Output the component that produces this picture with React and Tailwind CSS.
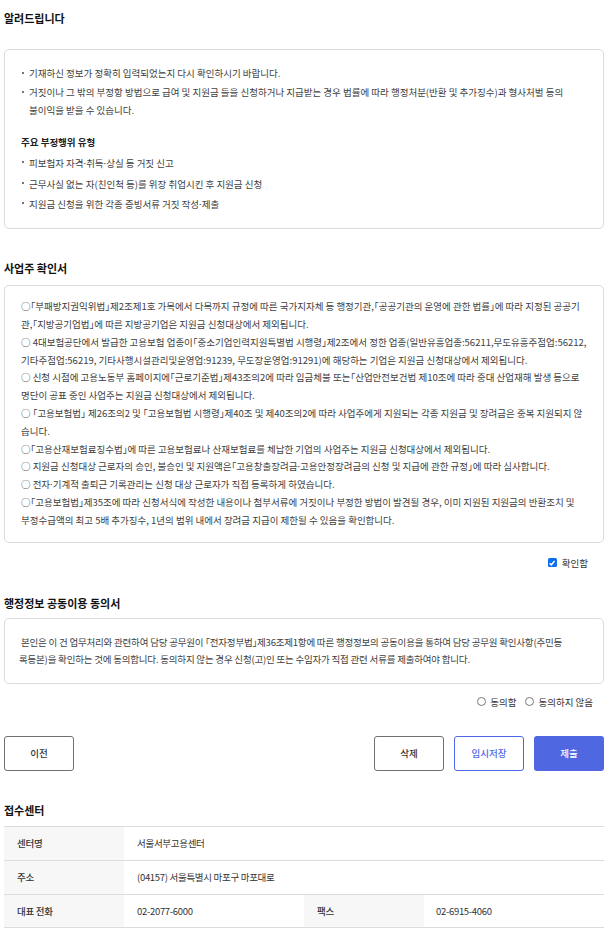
import React from "react";

const noticeItems = [
    ["기재하신 정보가 정확히 입력되었는지 다시 확인하시기 바랍니다."],
    [
        "거짓이나 그 밖의 부정항 방법으로 급여 및 지원금 들을 신청하거나 지급받는 경우 법률에 따라 행정처분(반환 및 추가징수)과 형사처벌 등의",
        "불이익을 받을 수 있습니다.",
    ],
];

const fraudItems = [
    "피보험자 자격·취득·상실 등 거짓 신고",
    "근무사실 없는 자(친인척 등)를 위장 취업시킨 후 지원금 신청",
    "지원금 신청을 위한 각종 증빙서류 거짓 작성·제출",
];

// 사업주 확인서 - lines kept as in the original wrap
const employerLines = [
    "○「부패방지권익위법」제2조제1호 가목에서 다목까지 규정에 따른 국가지자체 등 행정기관,「공공기관의 운영에 관한 법률」에 따라 지정된 공공기",
    "관,「지방공기업법」에 따른 지방공기업은 지원금 신청대상에서 제외됩니다.",
    "○ 4대보험공단에서 발급한 고용보험 업종이「중소기업인력지원특별법 시행령」제2조에서 정한 업종(일반유흥업종:56211,무도유흥주점업:56212,",
    "기타주점업:56219, 기타사행시설관리및운영업:91239, 무도장운영업:91291)에 해당하는 기업은 지원금 신청대상에서 제외됩니다.",
    "○ 신청 시점에 고용노동부 홈페이지에「근로기준법」제43조의2에 따라 임금체불 또는「산업안전보건법 제10조에 따라 중대 산업재해 발생 등으로",
    "명단이 공표 중인 사업주는 지원금 신청대상에서 제외됩니다.",
    "○ 「고용보험법」 제26조의2 및 「고용보험법 시행령」제40조 및 제40조의2에 따라 사업주에게 지원되는 각종 지원금 및 장려금은 중복 지원되지 않",
    "습니다.",
    "○「고용산재보험료징수법」에 따른 고용보험료나 산재보험료를 체납한 기업의 사업주는 지원금 신청대상에서 제외됩니다.",
    "○ 지원금 신청대상 근로자의 승인, 불승인 및 지원액은「고용창출장려금·고용안정장려금의 신청 및 지급에 관한 규정」에 따라 심사합니다.",
    "○ 전자·기계적 출퇴근 기록관리는 신청 대상 근로자가 직접 등록하게 하였습니다.",
    "○「고용보험법」제35조에 따라 신청서식에 작성한 내용이나 첨부서류에 거짓이나 부정한 방법이 발견될 경우, 이미 지원된 지원금의 반환조치 및",
    "부정수급액의 최고 5배 추가징수, 1년의 범위 내에서 장려금 지급이 제한될 수 있음을 확인합니다.",
];

// the CJK font draws the middle dot full width, the latin one keeps it tight
const withDots = (text) =>
    text.split("·").map((part, i) => (
        <React.Fragment key={i}>
            {i > 0 && <span className="font-['Noto_Sans']">·</span>}
            {part}
        </React.Fragment>
    ));

const SectionTitle = ({ children, className }) => (
    <h2 className={`text-[11px] leading-[20px] font-bold text-[#111] ${className}`}>{children}</h2>
);

const Bullet = ({ children }) => (
    <div className="flex items-start">
        <span className="w-[2px] h-[2px] bg-[#777] mt-[8px] ml-[1px] mr-[5px] shrink-0"></span>
        <div>{children}</div>
    </div>
);

const Radio = ({ label, className = "" }) => (
    <label className={`flex items-center ${className}`}>
        <span className="w-[9px] h-[9px] rounded-full border border-[#777] mr-[4px]"></span>
        {label}
    </label>
);

const App = () => {
    return (
        <div className="w-[600px] ml-[4px] pb-[4px] font-['Noto_Sans_CJK_KR',sans-serif] text-[#404040] [font-feature-settings:'halt']">
            <SectionTitle className="mt-[8px]">알려드립니다</SectionTitle>

            <div className="mt-[21px] h-[180px] border border-[#dcdcdc] rounded-[5px] pt-[14px] pl-[16px] pr-[14px] text-[9.5px]">
                <div className="leading-[18.5px]">
                    {noticeItems.map((item, i) => (
                        <Bullet key={i}>
                            {item.map((line, j) => (
                                <div key={j} className="whitespace-nowrap">{line}</div>
                            ))}
                        </Bullet>
                    ))}
                </div>
                <p className="mt-[13.5px] leading-[18px] font-bold text-[#222]">주요 부정행위 유형</p>
                <div className="mt-[2px] leading-[20px]">
                    {fraudItems.map((item) => (
                        <Bullet key={item}>{withDots(item)}</Bullet>
                    ))}
                </div>
            </div>

            <SectionTitle className="mt-[29px]">사업주 확인서</SectionTitle>

            <div className="mt-[7px] border border-[#dcdcdc] rounded-[5px] py-[12.3px] pl-[16px] pr-[4px] text-[9.5px] leading-[17.8px]">
                {employerLines.map((line, i) => (
                    <div key={i} className="whitespace-nowrap">{withDots(line)}</div>
                ))}
            </div>

            <div className="mt-[12px] h-[16px] flex items-center justify-end pr-[16px]">
                <span className="w-[9px] h-[9px] rounded-[1.5px] bg-[#0b6ff2] flex items-center justify-center mr-[5px]">
                    <svg viewBox="0 0 10 10" className="w-[8px] h-[8px]">
                        <path d="M2 5.2 L4.2 7.3 L8.2 2.6" fill="none" stroke="white" strokeWidth="1.8" />
                    </svg>
                </span>
                <span className="text-[9.5px] text-[#333]">확인함</span>
            </div>

            <SectionTitle className="mt-[22px]">행정정보 공동이용 동의서</SectionTitle>

            <div className="mt-[5px] h-[66px] border border-[#dcdcdc] rounded-[5px] pt-[15px] pl-[14px] pr-[4px] text-[9.5px] leading-[17.5px] tracking-[-0.2px]">
                <div className="whitespace-nowrap">
                    &nbsp;본인은 이 건 업무처리와 관련하여 담당 공무원이 「전자정부법」제36조제1항에 따른 행정정보의 공동이용을 통하여 담당 공무원 확인사항(주민등
                </div>
                <div className="whitespace-nowrap">
                    록등본)을 확인하는 것에 동의합니다. 동의하지 않는 경우 신청(고)인 또는 수임자가 직접 관련 서류를 제출하여야 합니다.
                </div>
            </div>

            <div className="mt-[10px] h-[16px] flex items-center justify-end pr-[11px] text-[9.5px] text-[#333]">
                <Radio label="동의함" />
                <Radio label="동의하지 않음" className="ml-[9px]" />
            </div>

            <div className="mt-[26px] flex items-center text-[9.5px] font-medium">
                <button className="w-[70px] h-[35px] border border-[#707070] rounded-[3px] text-[#333]">이전</button>
                <div className="ml-auto flex gap-[10px]">
                    <button className="w-[70px] h-[35px] border border-[#707070] rounded-[3px] text-[#333]">삭제</button>
                    <button className="w-[70px] h-[35px] border border-[#4d68e6] rounded-[3px] text-[#4d68e6]">임시저장</button>
                    <button className="w-[70px] h-[35px] bg-[#4f67e1] rounded-[3px] text-white">제출</button>
                </div>
            </div>

            <SectionTitle className="mt-[29px]">접수센터</SectionTitle>

            <div className="mt-[6px] border-t border-[#dcdcdc] text-[9.5px] text-[#333] tracking-[-0.3px]">
                <div className="flex h-[34px] border-b border-[#dcdcdc]">
                    <div className="w-[120px] bg-[#f7f7f7] flex items-center pl-[13px] font-medium">센터명</div>
                    <div className="flex-1 flex items-center pl-[13px]">서울서부고용센터</div>
                </div>
                <div className="flex h-[34px] border-b border-[#dcdcdc]">
                    <div className="w-[120px] bg-[#f7f7f7] flex items-center pl-[13px] font-medium">주소</div>
                    <div className="flex-1 flex items-center pl-[13px]">(04157) 서울특별시 마포구 마포대로</div>
                </div>
                <div className="flex h-[33px] border-b border-[#dcdcdc]">
                    <div className="w-[120px] bg-[#f7f7f7] flex items-center pl-[13px] font-medium">대표 전화</div>
                    <div className="w-[180px] flex items-center pl-[13px]">02-2077-6000</div>
                    <div className="w-[120px] bg-[#f7f7f7] flex items-center pl-[13px] font-medium">팩스</div>
                    <div className="flex-1 flex items-center pl-[12px]">02-6915-4060</div>
                </div>
            </div>
        </div>
    );
};

export default App;
